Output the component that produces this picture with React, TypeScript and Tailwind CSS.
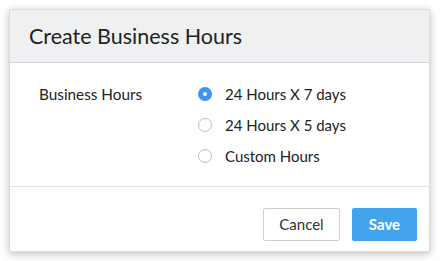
const options = [
  { label: '24 Hours X 7 days', checked: true },
  { label: '24 Hours X 5 days', checked: false },
  { label: 'Custom Hours', checked: false },
]

function Radio({ checked }: { checked: boolean }) {
  return checked ? (
    <span className="flex h-[14px] w-[14px] items-center justify-center rounded-full bg-[#3d93f0]">
      <span className="h-[4px] w-[4px] rounded-full bg-white" />
    </span>
  ) : (
    <span className="h-[14px] w-[14px] rounded-full border border-[#bdbdbd] bg-white" />
  )
}

export default function App() {
  return (
    <div className="h-[261px] w-[440px] bg-white pl-[9px] pt-[9px] font-['Lato',sans-serif] text-[#222]">
      <div className="flex h-[243px] w-[421px] flex-col border border-[#dcdcdc] bg-white shadow-[0_2px_8px_rgba(0,0,0,0.25)]">
        <div className="flex h-[53px] items-center border-b border-[#d4d6d9] bg-[#eff0f2] pl-[19px] text-[21.5px]">
          Create Business Hours
        </div>
        <div className="flex h-[124px] border-b border-[#e2e2e2] pt-[22px]">
          <div className="w-[188px] pl-[29px] text-[15.3px] leading-[18px]">Business Hours</div>
          <div className="flex flex-col gap-[13px]">
            {options.map((o) => (
              <div key={o.label} className="flex items-center gap-[13px] text-[15px] leading-[18px]">
                <Radio checked={o.checked} />
                {o.label}
              </div>
            ))}
          </div>
        </div>
        <div className="flex flex-1 items-start justify-end gap-[12px] pr-[12px] pt-[21px]">
          <button className="h-[33px] w-[77px] rounded-[2px] border border-[#cfcfcf] bg-white text-[15px] text-[#333]">
            Cancel
          </button>
          <button className="h-[33px] w-[65px] rounded-[2px] bg-[#42a4ec] text-[15px] font-bold text-white">
            Save
          </button>
        </div>
      </div>
    </div>
  )
}
